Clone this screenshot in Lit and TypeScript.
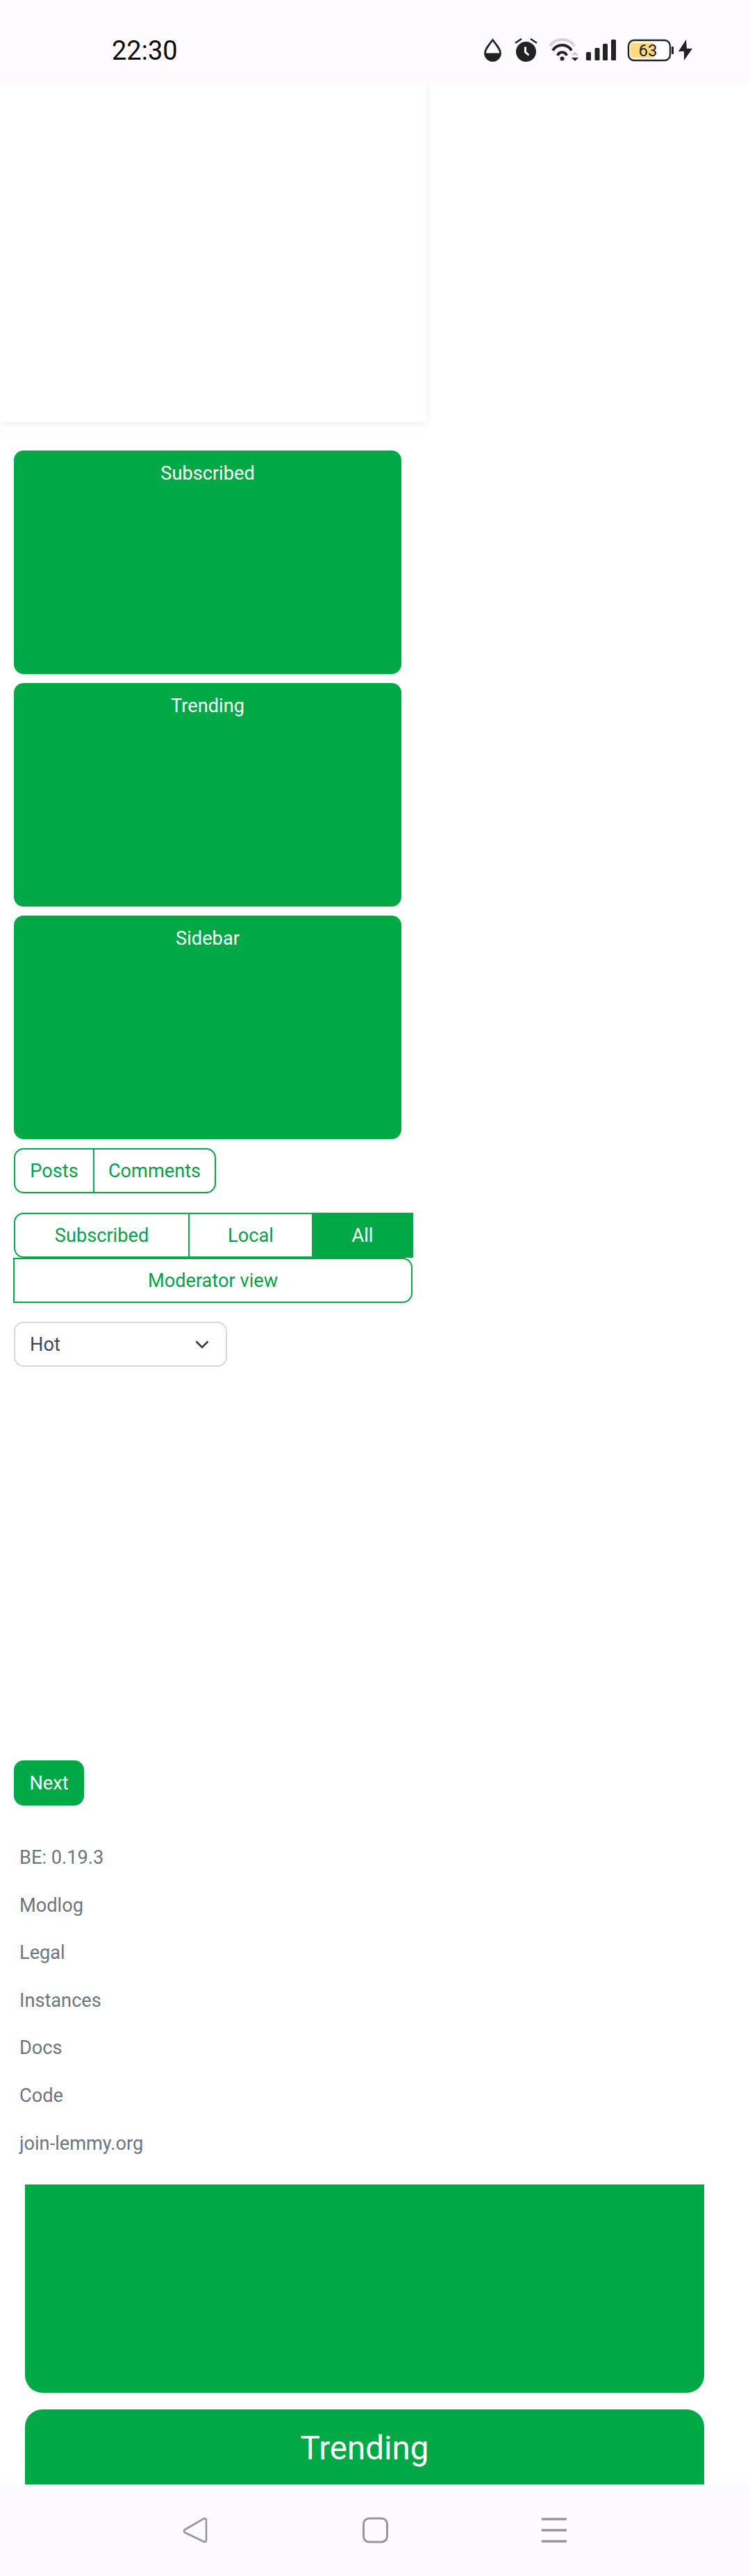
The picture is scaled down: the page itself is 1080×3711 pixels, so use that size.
import { LitElement, html, css } from "lit";
import { customElement } from "lit/decorators.js";

@customElement("app-root")
export class AppRoot extends LitElement {
  static styles = css`
    :host { display: flex; flex-direction: column; width: 1080px; height: 3711px; background: #fff; font-family: Roboto, "Liberation Sans", sans-serif; overflow: hidden; }
    .status { flex: 0 0 120px; height: 120px; background: #fefbff; display: flex; align-items: flex-start; position: relative; }
    .time { margin: 49px 0 0 161px; font-size: 38px; line-height: 48px; color: #0a0a0a; }
    .status-icons { display: block; margin: 50px 0 0 auto; margin-right: 80px; }
    main { flex: 1 1 auto; min-height: 0; overflow: hidden; background: #fff; }
    .panel { width: 615px; height: 488px; background: #fff; box-shadow: 0 2px 10px rgba(0,0,0,.08); }
    .column { padding: 41px 0 0 20px; width: 575px; }
    .card { width: 558px; height: 322px; background: #00a846; border-radius: 14px; color: #fff; font-size: 27.2px; line-height: 38px; text-align: center; padding-top: 14px; box-sizing: border-box; margin-bottom: 13px; }
    .card.last { margin-bottom: 0; }
    .group { display: flex; height: 65px; box-sizing: border-box; border: 2px solid #0aa64c; color: #05a04a; font-size: 27.2px; }
    .group > div { display: flex; align-items: center; justify-content: center; box-sizing: border-box; }
    .group > div + div { border-left: 2px solid #0aa64c; }
    .g1 { width: 291px; border-radius: 14px; margin-top: 13px; }
    .g1 .a { width: 112px; } .g1 .b { flex: 1; }
    .g2 { width: 575px; border-radius: 14px 0 0 14px; margin-top: 28px; }
    .g2 .a { width: 249px; } .g2 .b { width: 178px; } .g2 .c { flex: 1; background: #00a846; color: #fff; }
    .mod { width: 575px; height: 65px; margin: 0 0 0 -1px; box-sizing: border-box; border: 2px solid #0aa64c; border-radius: 0 14px 14px 0; color: #05a04a; font-size: 27.2px; display: flex; align-items: center; justify-content: center; }
    .select { width: 307px; height: 65px; box-sizing: border-box; border: 2px solid #d8d8d8; border-radius: 14px; margin-top: 27px; display: flex; align-items: center; justify-content: space-between; padding: 0 24px 0 21px; font-size: 27.2px; color: #3f4550; }
    .next { display: flex; align-items: center; justify-content: center; width: 101px; height: 65px; background: #00a846; color: #fff; border-radius: 14px; font-size: 27.2px; margin-top: 567px; }
    .links { margin: 41px 0 0 28px; color: #6c757d; font-size: 27.2px; line-height: 68.6px; }
    .wide { margin: 25px 66px 0 36px; background: #00a846; color: #fff; text-align: center; }
    .w1 { height: 300px; border-radius: 0 0 25px 25px; }
    .w2 { height: 140px; margin-top: 24px; border-radius: 25px 25px 0 0; font-size: 47.5px; line-height: 56px; padding-top: 28px; box-sizing: border-box; }
    .nav { flex: 0 0 132px; height: 132px; background: #fdfbff; display: block; }
    .nav svg { display: block; }
  `;

  render() {
    return html`
      <div class="status">
        <div class="time">22:30</div>
        <svg class="status-icons" width="310" height="45" viewBox="690 50 310 45">
          <path d="M709.5 57.5C703 66 698.5 71 698.5 76.5a11 11 0 0 0 22 0C720.5 71 716 66 709.5 57.5Z" fill="#fff" stroke="#222" stroke-width="2.6"/>
          <path d="M697.5 76.5h24a12 11.5 0 0 1-24 0Z" fill="#222"/>
          <circle cx="757.5" cy="74.5" r="14.5" fill="#222"/>
          <path d="M742 62l9-6M764 56l9 6" stroke="#222" stroke-width="2.6" fill="none"/>
          <path d="M756.5 67.5v7.5l5 4.5" stroke="#fff" stroke-width="3" fill="none"/>
          <path d="M792 66a21.5 21.5 0 0 1 35 0" stroke="#d4d4d4" stroke-width="4" fill="none"/>
          <path d="M796 72.7a15.7 15.7 0 0 1 27 0" stroke="#222" stroke-width="4" fill="none"/>
          <path d="M803 80a6.8 6.8 0 0 1 13 0" stroke="#222" stroke-width="4" fill="none"/>
          <circle cx="809.5" cy="84.5" r="3" fill="#222"/>
          <path d="M823 79.5l5-5 5 5Z" fill="#c8c8c8"/><path d="M823 83l5 5 5-5Z" fill="#222"/>
          <rect x="844" y="75" width="7" height="12" rx="1.5" fill="#222"/>
          <rect x="856.5" y="69" width="7" height="18" rx="1.5" fill="#222"/>
          <rect x="868" y="63" width="7" height="24" rx="1.5" fill="#222"/>
          <rect x="880" y="57" width="7" height="30" rx="1.5" fill="#222"/>
          <rect x="905" y="58" width="60" height="29" rx="8" fill="#fff" stroke="#222" stroke-width="2.4"/>
          <rect x="908" y="62" width="35" height="21" rx="3" fill="#ffd97f"/>
          <rect x="967" y="67" width="3" height="11" rx="1" fill="#222"/>
          <text x="933" y="81" font-family="Roboto, sans-serif" font-size="24" text-anchor="middle" fill="#222">63</text>
          <path d="M988 57L977 74h8v13l12-17h-8Z" fill="#222"/>
        </svg>
      </div>
      <main>
        <div class="panel"></div>
        <div class="column">
          <div class="card">Subscribed</div>
          <div class="card">Trending</div>
          <div class="card last">Sidebar</div>
          <div class="group g1"><div class="a">Posts</div><div class="b">Comments</div></div>
          <div class="group g2"><div class="a">Subscribed</div><div class="b">Local</div><div class="c">All</div></div>
          <div class="mod">Moderator view</div>
          <div class="select"><span>Hot</span>
            <svg width="20" height="12" viewBox="0 0 20 12"><path d="M1.5 1.5L10 10l8.5-8.5" fill="none" stroke="#343a40" stroke-width="2.6"/></svg>
          </div>
          <div class="next">Next</div>
        </div>
        <div class="links">
          <div>BE: 0.19.3</div><div>Modlog</div><div>Legal</div><div>Instances</div><div>Docs</div><div>Code</div><div>join-lemmy.org</div>
        </div>
        <div class="wide w1"></div>
        <div class="wide w2">Trending</div>
      </main>
      <div class="nav">
        <svg width="1080" height="132" viewBox="0 3579 1080 132">
          <path d="M297 3630.5c0-2-2-3-3.5-2l-27 15.5c-2 1.2-2 3.3 0 4.5l27 13c1.5 1 3.500 0 3.500-2Z" fill="none" stroke="#98969b" stroke-width="2.6"/>
          <rect x="523.5" y="3628" width="34" height="34" rx="8" fill="none" stroke="#98969b" stroke-width="3"/>
          <path d="M780 3629h36M780 3645h36M780 3661h36" stroke="#98969b" stroke-width="3.6"/>
        </svg>
      </div>
    `;
  }
}
